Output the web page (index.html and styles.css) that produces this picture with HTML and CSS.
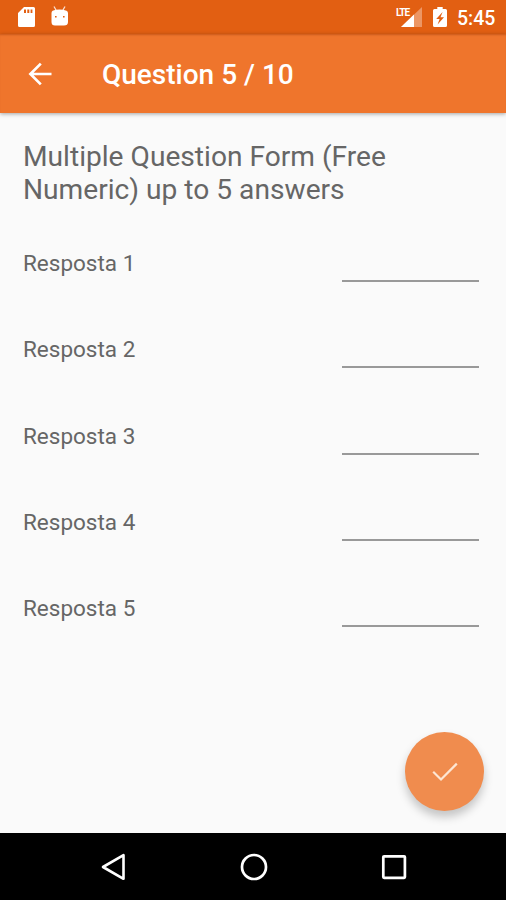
FILE: index.html
```html
<!DOCTYPE html>
<html>
<head>
	<meta charset="UTF-8">
	<title>Question 5 / 10</title>
	<link rel="stylesheet" href="styles.css">
</head>
<body>
	<div class="all">
		<div class="status">
			<svg class="sd" width="17" height="20" viewBox="0 0 17 20">
				<path fill="#fff" fill-rule="evenodd" d="M6 0H15.500Q17 0 17 1.500V18.500Q17 20 15.500 20H1.500Q0 20 0 18.500V6ZM6 2.500V6H8V2.500ZM9.300 2.500V6H11.300V2.500ZM12.600 2.500V6H14.400V2.500Z"/>
			</svg>
			<svg class="droid" width="17" height="20" viewBox="0 0 17 20">
				<path fill="none" stroke="#fff" stroke-opacity=".8" stroke-width="1.300" d="M3 .5L5 4M14 .5L12 4"/>
				<path fill="#fff" fill-rule="evenodd" d="M2.500 4.500Q4 3.500 8.500 3.500T14.500 4.500H15Q17 5 17 7V16Q17 19.500 13 19.500H4Q.5 19.500 .5 16V7Q.5 5 2 4.500ZM4 10V11.600H5.600V10ZM12 10V11.600H13.600V10Z"/>
			</svg>
			<div class="signal">
				<span>LTE</span>
				<svg width="21" height="20" viewBox="0 0 21 20">
					<path fill="#fff" fill-opacity=".35" d="M21 0V20H0Z"/>
					<path fill="#fff" d="M13 7.600V20H0Z"/>
				</svg>
			</div>
			<svg class="battery" width="14" height="20" viewBox="0 0 14 20">
				<path fill="#fff" fill-rule="evenodd" d="M4.300 0H9.700V2H12.500Q14 2 14 3.500V18.500Q14 20 12.500 20H1.500Q0 20 0 18.500V3.500Q0 2 1.500 2H4.300ZM9.600 5L3.200 12H6.600L4.600 17.500L11 10.300H7.500Z"/>
			</svg>
			<span class="time">5:45</span>
		</div>
		<div class="bar">
			<svg class="back" width="24" height="24" viewBox="0 0 24 24">
				<path fill="none" stroke="#fff" stroke-width="2.700" d="M23.500 12H3M12.800 1.600L2.400 12L12.800 22.400"/>
			</svg>
			<h1>Question 5 / 10</h1>
		</div>
		<div class="main">
			<h2>Multiple Question Form (Free Numeric) up to 5 answers</h2>
			<div class="row"><label>Resposta 1</label><input type="text"></div>
			<div class="row"><label>Resposta 2</label><input type="text"></div>
			<div class="row"><label>Resposta 3</label><input type="text"></div>
			<div class="row"><label>Resposta 4</label><input type="text"></div>
			<div class="row"><label>Resposta 5</label><input type="text"></div>
			<div class="fab">
				<svg width="26" height="20" viewBox="0 0 26 20">
					<path fill="none" stroke="#fde6d3" stroke-width="2.200" d="M1.200 9.800L9 17.500L24.800 1.600"/>
				</svg>
			</div>
		</div>
		<div class="nav">
			<svg width="30" height="30" viewBox="0 0 30 30">
				<path fill="none" stroke="#fff" stroke-width="2.600" stroke-linejoin="round" d="M25.500 3.200V26.800L5 15Z"/>
			</svg>
			<svg width="30" height="30" viewBox="0 0 30 30">
				<circle cx="15" cy="15" r="12" fill="none" stroke="#fff" stroke-width="2.700"/>
			</svg>
			<svg width="30" height="30" viewBox="0 0 30 30">
				<rect x="4.300" y="4.300" width="21.600" height="21.600" rx=".8" fill="none" stroke="#fff" stroke-width="2.700"/>
			</svg>
		</div>
	</div>
</body>
</html>
```

FILE: styles.css
```css
*{
	padding: 0;
	margin:0;
	box-sizing: border-box;
}
body{
	font-family: Roboto, sans-serif;
	background: #fafafa;
}
.all{
	width:506px;
	height:900px;
	display:flex;
	flex-direction: column;
	overflow: hidden;
}
.status{
	height:34px;
	display:flex;
	align-items: flex-start;
	padding:7px 11px 0 18px;
	background: #e25f12;
	color:#fff;
}
.droid{
	margin-left:16px;
	margin-top:-1px;
}
.signal{
	position: relative;
	width:21px;
	height:20px;
	margin-left:auto;
}
.signal span{
	position: absolute;
	left:-5px;
	top:1px;
	font-size: 10px;
	line-height: 10px;
	font-weight: bold;
	letter-spacing: -1px;
}
.battery{
	margin-left:11px;
}
.time{
	width:38px;
	margin-left:10px;
	font-size: 19.500px;
	line-height: 23px;
	font-weight: 500;
	white-space: nowrap;
}
.bar{
	height:79px;
	display:flex;
	align-items: center;
	padding-left:28px;
	background: #ef752c;
	color:#fff;
	box-shadow: inset 0 2px 2px -1px rgba(150,50,0,.4), 0 1px 4px rgba(0,0,0,.35);
	position: relative;
}
.bar h1{
	margin-left:50px;
	padding-top:2px;
	font-size: 28px;
	font-weight: 500;
}
.main{
	flex:1;
	padding:27px 27px 0 23px;
	position: relative;
	color:#666;
}
.main h2{
	font-size: 28.150px;
	line-height: 33px;
	font-weight: normal;
	margin-bottom: 29px;
}
.row{
	height:86.250px;
	display:flex;
	justify-content: space-between;
	align-items: flex-start;
}
.row label{
	padding-top:15px;
	font-size: 22.500px;
	line-height: 26px;
}
.row input{
	width:137px;
	height:47px;
	border:none;
	border-bottom: 2px solid #999;
	background: transparent;
	font-size: 22px;
	outline: none;
}
.fab{
	position: absolute;
	right:22px;
	bottom:22px;
	width:79px;
	height:79px;
	display:flex;
	align-items: center;
	justify-content: center;
	border-radius: 100%;
	background: #f08c4e;
	box-shadow: 0 6px 10px rgba(0,0,0,.22);
}
.nav{
	height:67px;
	display:flex;
	justify-content: space-between;
	align-items: center;
	padding:0 97px 0 98px;
	background: #000;
}
```
